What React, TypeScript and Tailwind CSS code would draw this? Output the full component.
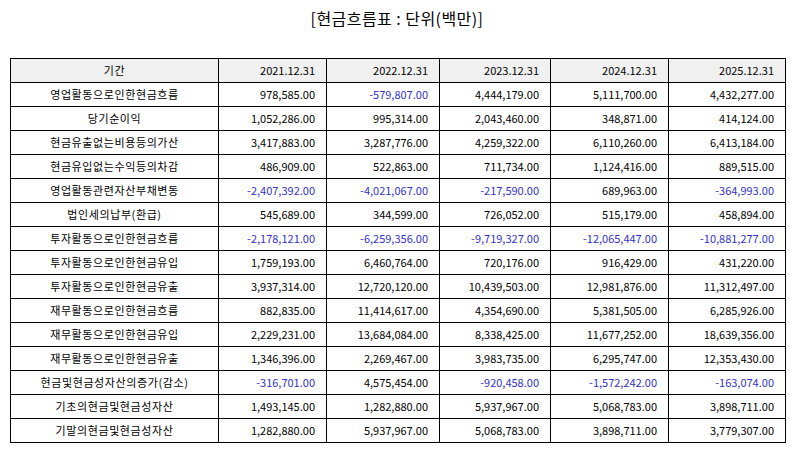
import React from "react";

const years = ["2021.12.31", "2022.12.31", "2023.12.31", "2024.12.31", "2025.12.31"];

const rows: [string, string[]][] = [
  ["영업활동으로인한현금흐름", ["978,585.00", "-579,807.00", "4,444,179.00", "5,111,700.00", "4,432,277.00"]],
  ["당기순이익", ["1,052,286.00", "995,314.00", "2,043,460.00", "348,871.00", "414,124.00"]],
  ["현금유출없는비용등의가산", ["3,417,883.00", "3,287,776.00", "4,259,322.00", "6,110,260.00", "6,413,184.00"]],
  ["현금유입없는수익등의차감", ["486,909.00", "522,863.00", "711,734.00", "1,124,416.00", "889,515.00"]],
  ["영업활동관련자산부채변동", ["-2,407,392.00", "-4,021,067.00", "-217,590.00", "689,963.00", "-364,993.00"]],
  ["법인세의납부(환급)", ["545,689.00", "344,599.00", "726,052.00", "515,179.00", "458,894.00"]],
  ["투자활동으로인한현금흐름", ["-2,178,121.00", "-6,259,356.00", "-9,719,327.00", "-12,065,447.00", "-10,881,277.00"]],
  ["투자활동으로인한현금유입", ["1,759,193.00", "6,460,764.00", "720,176.00", "916,429.00", "431,220.00"]],
  ["투자활동으로인한현금유출", ["3,937,314.00", "12,720,120.00", "10,439,503.00", "12,981,876.00", "11,312,497.00"]],
  ["재무활동으로인한현금흐름", ["882,835.00", "11,414,617.00", "4,354,690.00", "5,381,505.00", "6,285,926.00"]],
  ["재무활동으로인한현금유입", ["2,229,231.00", "13,684,084.00", "8,338,425.00", "11,677,252.00", "18,639,356.00"]],
  ["재무활동으로인한현금유출", ["1,346,396.00", "2,269,467.00", "3,983,735.00", "6,295,747.00", "12,353,430.00"]],
  ["현금및현금성자산의증가(감소)", ["-316,701.00", "4,575,454.00", "-920,458.00", "-1,572,242.00", "-163,074.00"]],
  ["기초의현금및현금성자산", ["1,493,145.00", "1,282,880.00", "5,937,967.00", "5,068,783.00", "3,898,711.00"]],
  ["기말의현금및현금성자산", ["1,282,880.00", "5,937,967.00", "5,068,783.00", "3,898,711.00", "3,779,307.00"]],
];

export default function App() {
  return (
    <div
      className="w-[794px] h-[452px] bg-white text-black"
      style={{ fontFamily: '"Noto Sans CJK KR", "Noto Sans", sans-serif' }}
    >
      <div className="h-[36px] flex items-center justify-center text-[16px] leading-none tracking-[0.45px]">
        [현금흐름표 : 단위(백만)]
      </div>
      <div className="pt-[22px] pl-[10px]">
        <table className="table-fixed border-collapse w-[775px] text-[11px]">
          <colgroup>
            <col className="w-[208px]" />
            <col className="w-[108px]" />
            <col className="w-[113px]" />
            <col className="w-[111px]" />
            <col className="w-[118px]" />
            <col className="w-[117px]" />
          </colgroup>
          <thead>
            <tr className="h-[24px] bg-[#f0f0f0]">
              <th className="border border-black font-normal text-center p-0 tracking-[0.6px]">기간</th>
              {years.map((y) => (
                <th key={y} className="border border-black font-normal text-right pr-[11px] p-0">
                  {y}
                </th>
              ))}
            </tr>
          </thead>
          <tbody>
            {rows.map(([label, vals]) => (
              <tr key={label} className="h-[24px]">
                <td className="border border-black text-center p-0 tracking-[0.6px]">{label}</td>
                {vals.map((v, i) => (
                  <td
                    key={i}
                    className={`border border-black text-right pr-[11px] p-0 ${
                      v.startsWith("-") ? "text-[#3232c8]" : ""
                    }`}
                  >
                    {v}
                  </td>
                ))}
              </tr>
            ))}
          </tbody>
        </table>
      </div>
    </div>
  );
}
